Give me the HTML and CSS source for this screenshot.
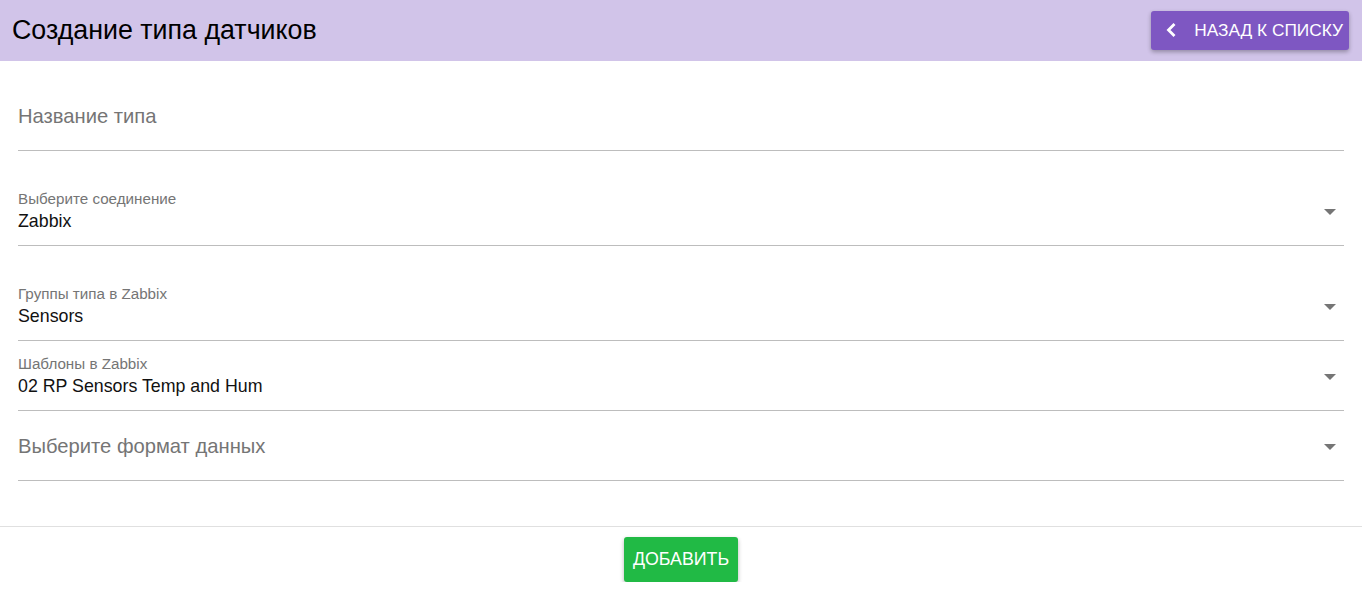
FILE: index.html
```html
<!DOCTYPE html>
<html lang="ru">
<head>
    <meta charset="UTF-8">
    <title>Создание типа датчиков</title>
    <link rel="stylesheet" href="styles.css">
</head>
<body>

<header class="topbar">
    <h1 class="topbar-title">Создание типа датчиков</h1>
    <button class="btn-back">
        <svg class="btn-back-icon" width="10" height="14" viewBox="0 0 10 14">
            <path d="M8.5 1 L2.5 7 L8.5 13" fill="none" stroke="#fff" stroke-width="2.8"/>
        </svg>
        Назад к списку
    </button>
</header>

<form class="form">
    <div class="field field-first">
        <span class="placeholder">Название типа</span>
    </div>

    <div class="field field-spaced select">
        <span class="label">Выберите соединение</span>
        <span class="value">Zabbix</span>
        <span class="arrow"></span>
    </div>

    <div class="field field-spaced select">
        <span class="label">Группы типа в Zabbix</span>
        <span class="value">Sensors</span>
        <span class="arrow"></span>
    </div>

    <div class="field select">
        <span class="label">Шаблоны в Zabbix</span>
        <span class="value">02 RP Sensors Temp and Hum</span>
        <span class="arrow"></span>
    </div>

    <div class="field select">
        <span class="placeholder">Выберите формат данных</span>
        <span class="arrow"></span>
    </div>
</form>

<div class="actions">
    <button class="btn-add">Добавить</button>
</div>

</body>
</html>
```

FILE: styles.css
```css
body {
    font-family: "Liberation Sans", Arial, sans-serif;
    background-color: #fff;
    margin: 0;
    padding: 0;
    color: #111;
}

/* Top bar */
.topbar {
    background-color: #d1c4e9;
    height: 61px;
    display: flex;
    align-items: center;
    justify-content: space-between;
    padding: 0 13px 0 12px;
    box-sizing: border-box;
}
.topbar-title {
    margin: 0;
    font-size: 26.8px;
    font-weight: normal;
    color: #000;
}
.btn-back {
    background-color: #7e57c2;
    color: white;
    border: none;
    border-radius: 3px;
    height: 39px;
    padding: 0 6px 0 15px;
    font-family: inherit;
    font-size: 17.3px;
    text-transform: uppercase;
    display: flex;
    align-items: center;
    gap: 18px;
    box-shadow: 0 2px 4px rgba(0, 0, 0, 0.3);
    margin-bottom: 1px;
}

/* Form fields */
.form {
    padding: 0 18px;
}
.field {
    position: relative;
    height: 69px;
    border-bottom: 1px solid #bdbdbd;
}
.field-first {
    margin-top: 20px;
}
.field-spaced {
    margin-top: 25px;
}
.placeholder {
    position: absolute;
    left: 0;
    top: 24px;
    font-size: 20.2px;
    color: #757575;
}
.label {
    position: absolute;
    left: 0;
    top: 14px;
    font-size: 15.2px;
    color: #757575;
}
.value {
    position: absolute;
    left: 0;
    top: 35px;
    font-size: 17.8px;
    color: #111;
}
.arrow {
    position: absolute;
    right: 8px;
    top: 33px;
    width: 0;
    height: 0;
    border-left: 6px solid transparent;
    border-right: 6px solid transparent;
    border-top: 6px solid #757575;
}

/* Bottom actions */
.actions {
    margin-top: 45px;
    border-top: 1px solid #e0e0e0;
    padding-top: 10px;
    display: flex;
    justify-content: center;
}
.btn-add {
    background-color: #21ba45;
    color: white;
    border: none;
    border-radius: 3px;
    height: 45px;
    padding: 0 9px;
    font-family: inherit;
    font-size: 17.8px;
    text-transform: uppercase;
    box-shadow: 0 2px 4px rgba(0, 0, 0, 0.3);
}
```
